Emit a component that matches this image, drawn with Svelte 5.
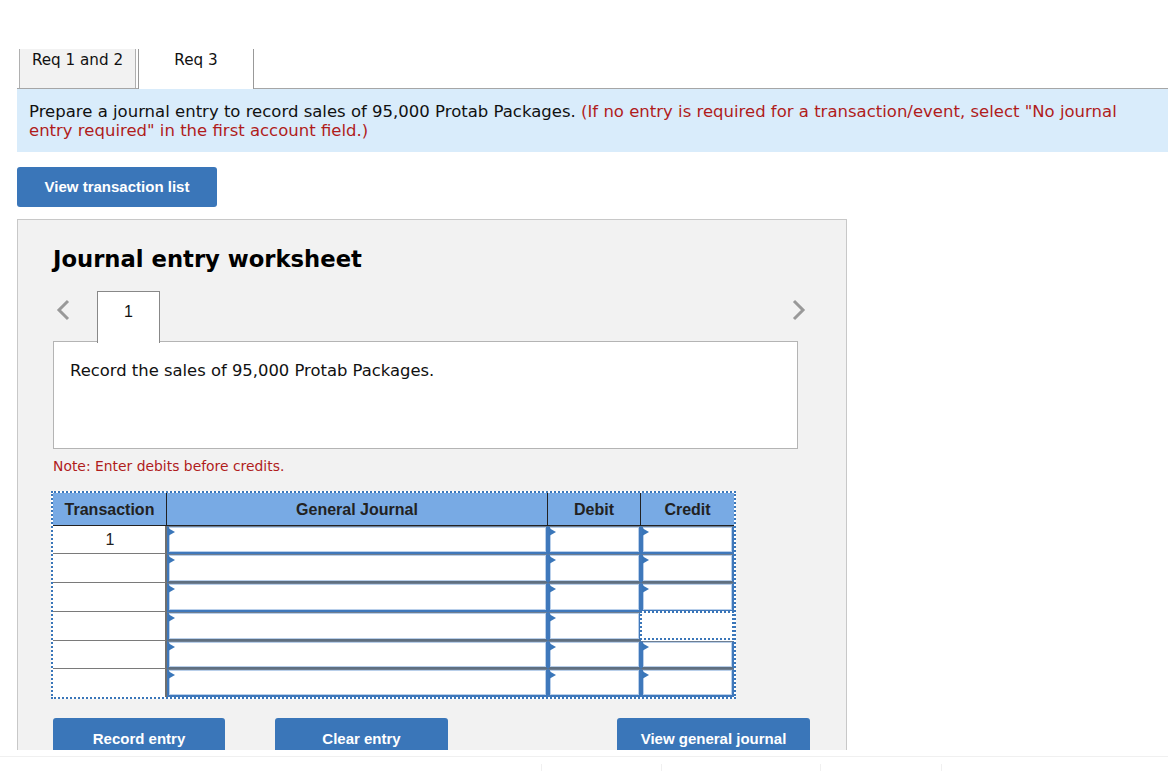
<script>
  // band: colour of the rule under each row of inputs
  const rows = [
    { id: "1", band: "blue" },
    { id: "", band: "grey" },
    { id: "", band: "blue" },
    { id: "", band: "grey", focus: true },
    { id: "", band: "grey" },
    { id: "", band: "blue" }
  ];
  const ticks = [541, 661, 820, 941];
</script>

<div class="viewport">
  <div class="tabs">
    <div class="tab off">Req 1 and 2</div>
    <div class="tab on">Req 3</div>
  </div>

  <div class="prompt">
    Prepare a journal entry to record sales of 95,000 Protab Packages.
    <span class="red">(If no entry is required for a transaction/event, select "No journal entry required" in the first account field.)</span>
  </div>

  <button class="btn list">View transaction list</button>

  <div class="card">
    <h2>Journal entry worksheet</h2>

    <div class="steps">
      <svg class="arrow" width="16" height="24" viewBox="0 0 16 24"><path d="M13 3 L4 12 L13 21" fill="none" stroke="#999" stroke-width="3" /></svg>
      <div class="step">1</div>
      <svg class="arrow next" width="16" height="24" viewBox="0 0 16 24"><path d="M3 3 L12 12 L3 21" fill="none" stroke="#999" stroke-width="3" /></svg>
    </div>
    <div class="desc">Record the sales of 95,000 Protab Packages.</div>

    <p class="note">Note: Enter debits before credits.</p>

    <div class="journal">
      <div class="head">Transaction</div>
      <div class="head">General Journal</div>
      <div class="head">Debit</div>
      <div class="head last">Credit</div>
      {#each rows as row, i}
        <div class="tx" class:bottom={i === 5}>{row.id}</div>
        <div class="field {row.band}"><i></i></div>
        <div class="field {row.band}"><i></i></div>
        {#if row.focus}
          <div class="field focused"></div>
        {:else}
          <div class="field {row.band}"><i></i></div>
        {/if}
      {/each}
    </div>

    <div class="actions">
      <button class="btn record">Record entry</button>
      <button class="btn clear">Clear entry</button>
      <button class="btn general">View general journal</button>
    </div>
  </div>
</div>

<div class="foot">
  {#each ticks as t, i}
    <span class="tick" style="margin-left: {i === 0 ? t : t - ticks[i - 1] - 1}px"></span>
  {/each}
</div>

<style>
  :global(body) {
    margin: 0;
    background: #fff;
    font-family: "DejaVu Sans", Verdana, sans-serif;
    color: #111;
  }
  .viewport {
    height: 750px;
    overflow: hidden;
    padding: 49px 0 0 17px;
    box-sizing: border-box;
  }
  .tabs {
    display: flex;
    height: 40px;
    box-sizing: border-box;
    border-bottom: 1px solid #a6a6a6;
    padding-left: 2px;
  }
  .tab {
    box-sizing: border-box;
    height: 40px;
    font-size: 15.2px;
    line-height: 22px;
    text-align: center;
    border-left: 1px solid #b0b0b0;
    border-right: 1px solid #b0b0b0;
  }
  .tab.off {
    width: 117px;
    background: #f2f2f2;
    height: 39px;
  }
  .tab.on {
    width: 116px;
    margin-left: 2px;
    background: #fff;
    border-color: #999;
  }
  .prompt {
    background: #d9ecfb;
    height: 63px;
    box-sizing: border-box;
    padding: 13px 40px 0 12px;
    font-size: 16.5px;
    line-height: 19px;
  }
  .red {
    color: #b01c1c;
  }
  .btn {
    display: block;
    background: #3a76b9;
    color: #fff;
    border: 0;
    border-radius: 3px;
    font-family: "Liberation Sans", Arial, sans-serif;
    font-weight: bold;
    font-size: 15px;
    padding: 0 0 2px;
  }
  .list {
    width: 200px;
    height: 40px;
    margin-top: 15px;
  }
  .card {
    width: 830px;
    box-sizing: border-box;
    margin-top: 12px;
    background: #f2f2f2;
    border: 1px solid #c8c8c8;
    padding: 0 35px;
    height: 600px;
  }
  h2 {
    margin: 25px 0 0;
    font-size: 22.7px;
    line-height: 29px;
    font-weight: bold;
    color: #000;
  }
  .steps {
    display: flex;
    align-items: flex-start;
    margin-top: 17px;
    height: 50px;
    width: 745px;
  }
  .arrow {
    margin: 7px 0 0 2px;
  }
  .arrow.next {
    margin-left: auto;
    margin-right: -9px;
  }
  .step {
    box-sizing: border-box;
    width: 63px;
    height: 52px;
    margin-left: 26px;
    position: relative;
    z-index: 1;
    background: #fff;
    border: 1px solid #888;
    border-bottom: 0;
    text-align: center;
    font-family: "Liberation Sans", Arial, sans-serif;
    font-size: 16px;
    line-height: 39px;
  }
  .desc {
    box-sizing: border-box;
    width: 745px;
    height: 108px;
    background: #fff;
    border: 1px solid #b4b4b4;
    padding: 19px 16px;
    font-size: 16.4px;
    line-height: 20px;
  }
  .note {
    margin: 9px 0 0;
    font-size: 13.9px;
    line-height: 17px;
    color: #b01c1c;
  }
  .journal {
    display: grid;
    grid-template-columns: 114px 381px 93px 93px;
    grid-template-rows: 33px 28px 29px 29px 29px 28px 28px;
    width: 685px;
    height: 208px;
    box-sizing: border-box;
    margin: 16px 0 0 -2px;
    border: 2px dotted #3a76b9;
    background: #fff;
  }
  .head {
    background: #78aae4;
    border-right: 1px solid #222;
    border-bottom: 1px solid #222;
    text-align: center;
    font-family: "Liberation Sans", Arial, sans-serif;
    font-weight: bold;
    font-size: 16px;
    line-height: 33px;
    color: #222;
  }
  .head.last {
    border-right: 0;
  }
  .tx {
    box-sizing: border-box;
    border-right: 2px solid #6f6f6f;
    border-bottom: 1px solid #7a7a7a;
    padding-left: 2px;
    text-align: center;
    font-family: "Liberation Sans", Arial, sans-serif;
    font-size: 16px;
    line-height: 28px;
    color: #222;
  }
  .tx.bottom {
    border-bottom: 0;
  }
  .field {
    position: relative;
    box-sizing: border-box;
    background: #fff;
    border-left: 2px solid #3f78bb;
    border-right: 2px solid #3f78bb;
    border-top: 1px solid #6f7f92;
    box-shadow: inset 0 0 0 1px #b9cfea;
  }
  .field.blue {
    border-bottom: 2px solid #3f78bb;
  }
  .field.grey {
    border-bottom: 2px solid #5f6f80;
  }
  .field i {
    position: absolute;
    left: -1px;
    top: 1px;
    border-left: 7px solid #3a76b9;
    border-top: 4px solid transparent;
    border-bottom: 4px solid transparent;
  }
  .field.focused {
    border: 2px dotted #3a76b9;
    box-shadow: none;
    margin: -1px 0 1px -1px;
  }
  .actions {
    display: flex;
    margin-top: 19px;
  }
  .actions .btn {
    height: 42px;
    flex: none;
  }
  .record {
    width: 172px;
  }
  .clear {
    width: 173px;
    margin-left: 50px;
  }
  .general {
    width: 193px;
    margin-left: 169px;
  }
  .foot {
    height: 21px;
    box-sizing: border-box;
    margin-top: 6px;
    border-top: 1px solid #f0f0f0;
    padding-top: 7px;
    display: flex;
    overflow: hidden;
  }
  .tick {
    display: block;
    flex: none;
    width: 1px;
    height: 7px;
    background: #f0f0f0;
  }
</style>
